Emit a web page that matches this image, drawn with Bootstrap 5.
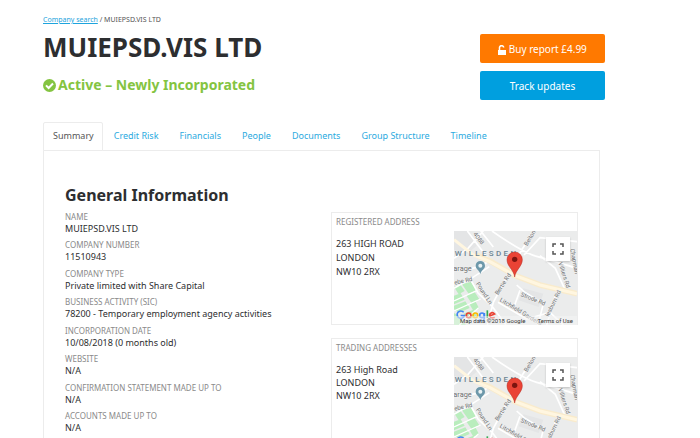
<!DOCTYPE html>
<html lang="en">
<head>
<meta charset="utf-8">
<meta name="viewport" content="width=device-width, initial-scale=1">
<title>MUIEPSD.VIS LTD</title>
<link href="https://cdn.jsdelivr.net/npm/bootstrap@5.3.0/dist/css/bootstrap.min.css" rel="stylesheet">
<style>
body{font-family:"Noto Sans","Open Sans",sans-serif;color:#2d2e30;font-size:10px;line-height:12px;background:#fff}
.page{padding:14px 95px 0 43px}
.crumbs{font-size:7px;line-height:11px;color:#555}
.crumbs a{color:#1ea4dd}
h1{font-size:26px;line-height:38px;font-weight:700;margin:3px 0 0}
.status{font-size:14px;line-height:20px;font-weight:700;color:#84c441;margin:9px 0 0;gap:2px}
.actions{width:125px;gap:8px;padding-top:20px}
.actions .btn{font-size:10px;line-height:16px;padding:5px 4px;border-radius:2px;color:#fff;height:29px}
.buy{background:#ff7900}.track{background:#009fdf}
.report{margin:22px 5px 0 0}
.nav-tabs{--bs-nav-tabs-border-color:#ececec;--bs-nav-tabs-border-radius:2px;--bs-nav-tabs-link-active-border-color:#ececec;--bs-nav-tabs-link-active-color:#555;--bs-nav-link-color:#2baae0}
.nav-tabs .nav-link{font-size:9px;line-height:12px;padding:7px 9px 8px 10px}
.nav-tabs .nav-link.active{padding-left:9px;padding-right:8px}
.panel{border:1px solid #ececec;border-top:0;padding:32px 21px 40px 21px}
h2{font-size:16px;line-height:24px;font-weight:700;margin:0 0 4px}
.facts dt,.box-title{font-size:8px;line-height:12px;font-weight:400;color:#8a8a8a;text-transform:uppercase;margin:0}
.facts dd{margin:0 0 5px;line-height:11px;font-size:9px}
.facts>div:nth-child(even) dd{margin-bottom:6px}
.boxes{width:247px;gap:13px;padding-top:29px}
.address{border:1px solid #ececec}
.box-title{padding:3px 4px}
.address address{font-size:9px;line-height:14px;margin:0;padding:6px 4px}
.address address.tight{line-height:13px}
.map{width:123px;height:94px;margin:0 0 -1px}
.map svg{display:block}
.expand{right:7px;top:6px;width:24px;height:24px;background:#fff;border:0;box-shadow:0 1px 2px #0003}
.credit{left:0;right:0;bottom:0;padding:0 4px 0 6px;font:6px/9px Roboto,sans-serif;color:#333;background:#f5f5f580}
.credit a{color:#333}
</style>
<script src="https://cdn.jsdelivr.net/npm/bootstrap@5.3.0/dist/js/bootstrap.bundle.min.js"></script>
</head>
<body>
<svg width="0" height="0" class="position-absolute" aria-hidden="true">
<symbol id="map" viewBox="12 18 369 282">
<path fill="#ebecec" d="M12 18h369v282H12z"/>
<path fill="#e4e5e6" d="M12 18h42l26 44-28 24-40-12zM220 190l60 16-14 40-60-20z"/>
<path fill="#b9edbd" d="M12 186l18-8 14 20-18 10zM36 178l26-8 18 26-24 10zM12 212l20-7 12 19-32 14zM48 210l26-9 14 22-24 10zM12 242l34-13 13 20-32 14-15-10zM58 236l18-7 12 22-18 6zM12 264l12 7 24 29H12zM40 266l30-12 10 18-24 12z"/>
<g fill="none" stroke="#fff" stroke-width="5">
<path d="M12 100L54 70 100 18M52 18L112 98 168 140M92 18L130 66M126 18Q220 84 260 94T381 130M250 18L206 90 130 232 112 300M12 132Q80 140 120 105M12 190L64 160 118 125M60 160L84 204 128 246 168 300M200 180L222 200 280 236 264 300M210 196L192 246M222 90L270 38 381 50M270 92L316 130 350 205M316 212L290 300M144 232L230 282 300 262 340 300"/>
<path stroke-width="4" d="M12 228L82 196M12 258L92 222M28 300L86 248"/>
</g>
<path fill="none" stroke="#f9ebcc" stroke-width="17" d="M80 90L120 108 196 152 270 180 381 206"/>
<path fill="none" stroke="#fff6e0" stroke-width="9" d="M12 44L70 90L120 110 196 152 270 180 381 206"/>
<g font-family="Roboto, sans-serif" font-size="18" fill="#6e7072" stroke="#f1f1f1" stroke-width="3" paint-order="stroke">
<text transform="translate(69 28) rotate(52)">4088</text>
<text transform="translate(232 64) rotate(-60)">Belton</text>
<text transform="translate(14 179) rotate(-12)">ebe Rd</text>
<text transform="translate(77 176) rotate(57)">Pound Ln</text>
<text transform="translate(144 211) rotate(-57)">Bertie Rd</text>
<text transform="translate(211 213) rotate(22)">Strode Rd</text>
<text transform="translate(148 228) rotate(31)">Litchfield Gardens</text>
<text transform="translate(296 276) rotate(-64)">lesburn Rd</text>
<text transform="translate(325 114) rotate(72)">Villiers Rd</text>
<text transform="translate(361 72) rotate(80)">Chapman</text>
<text x="10" y="139" font-size="22">arage</text>
</g>
<text x="14" y="93" font-family="Roboto, sans-serif" font-size="24" font-weight="500" letter-spacing="7" fill="#6c8593">WILLESDEN</text>
<path fill="#6d98aa" d="M91 147c-3-12-14-15-14-25a14 14 0 0 1 28 0c0 10-11 13-14 25z"/><circle cx="91" cy="122" r="6" fill="#e9f2f4"/>
<path fill="#ea4335" stroke="#b52b21" stroke-width="1.500" d="M194 156c-3-22-23-32-23-52a23 23 0 0 1 46 0c0 20-20 30-23 52z"/><circle cx="194" cy="103" r="8" fill="#7c140f"/>
<g fill="none" stroke-width="5">
<path stroke="#4285f4" d="M41 262a11 11 0 1 0 2 10H32"/>
<circle cx="56" cy="271" r="7" stroke="#ea4335"/><circle cx="76" cy="271" r="7" stroke="#fbbc05"/>
<path stroke="#4285f4" d="M103 264v15q-1 9-8 9-6 0-8-5"/><circle cx="96" cy="271" r="7" stroke="#4285f4"/>
<path stroke="#34a853" d="M112 256v23"/><path stroke="#ea4335" d="M119 273l15-6q-4-5-9-4-8 3-6 11 5 8 15 3"/>
</g>
</symbol>
<symbol id="corners" viewBox="0 0 12 12"><path fill="none" stroke="#555" stroke-width="1.500" d="M1 4V1h3M8 1h3v3M11 8v3H8M4 11H1V8"/></symbol>
</svg>
<main class="page">
<header class="d-flex justify-content-between align-items-start">
<div>
<nav class="crumbs" aria-label="Breadcrumb"><a href="#">Company search</a> / MUIEPSD.VIS LTD</nav>
<h1>MUIEPSD.VIS LTD</h1>
<p class="status d-flex align-items-center"><svg width="13" height="13" viewBox="0 0 13 13" aria-hidden="true"><circle cx="6.500" cy="6.500" r="6.500" fill="#84c441"/><path d="M3 6.400l2.600 2.600L10 4.500" fill="none" stroke="#fff" stroke-width="2"/></svg>Active – Newly Incorporated</p>
</div>
<div class="actions d-flex flex-column flex-shrink-0">
<button type="button" class="btn border-0 buy"><svg width="8" height="10" viewBox="0 0 8 10" aria-hidden="true"><path fill="#fff" d="M0 5h8v5H0z"/><path d="M1.500 5V3a2 2 0 0 1 4.200-.5" fill="none" stroke="#fff" stroke-width="1.500"/></svg> Buy report £4.99</button>
<button type="button" class="btn border-0 track">Track updates</button>
</div>
</header>
<section class="report">
<ul class="nav nav-tabs flex-nowrap text-nowrap">
<li class="nav-item"><a class="nav-link active" aria-current="page" href="#">Summary</a></li>
<li class="nav-item"><a class="nav-link" href="#">Credit Risk</a></li>
<li class="nav-item"><a class="nav-link" href="#">Financials</a></li>
<li class="nav-item"><a class="nav-link" href="#">People</a></li>
<li class="nav-item"><a class="nav-link" href="#">Documents</a></li>
<li class="nav-item"><a class="nav-link" href="#">Group Structure</a></li>
<li class="nav-item"><a class="nav-link" href="#">Timeline</a></li>
</ul>
<div class="panel d-flex justify-content-between align-items-start">
<div>
<h2>General Information</h2>
<dl class="facts mb-0">
<div><dt>Name</dt><dd>MUIEPSD.VIS LTD</dd></div>
<div><dt>Company number</dt><dd>11510943</dd></div>
<div><dt>Company type</dt><dd>Private limited with Share Capital</dd></div>
<div><dt>Business activity (SIC)</dt><dd>78200 - Temporary employment agency activities</dd></div>
<div><dt>Incorporation date</dt><dd>10/08/2018 (0 months old)</dd></div>
<div><dt>Website</dt><dd>N/A</dd></div>
<div><dt>Confirmation statement made up to</dt><dd>N/A</dd></div>
<div><dt>Accounts made up to</dt><dd>N/A</dd></div>
</dl>
</div>
<div class="boxes d-flex flex-column flex-shrink-0">
<section class="address">
<h3 class="box-title">Registered address</h3>
<div class="d-flex justify-content-between">
<address>263 HIGH ROAD<br>LONDON<br>NW10 2RX</address>
<div class="map position-relative"><svg width="123" height="94" role="img" aria-label="Map of Willesden"><use href="#map"/></svg>
<button type="button" class="expand position-absolute d-flex align-items-center justify-content-center p-0" aria-label="Full screen"><svg width="12" height="12"><use href="#corners"/></svg></button>
<div class="credit position-absolute d-flex justify-content-between"><span>Map data ©2018 Google</span><a class="text-decoration-none" href="#">Terms of Use</a></div></div>
</div>
</section>
<section class="address">
<h3 class="box-title">Trading addresses</h3>
<div class="d-flex justify-content-between">
<address class="tight">263 High Road<br>LONDON<br>NW10 2RX</address>
<div class="map position-relative"><svg width="123" height="94" role="img" aria-label="Map of Willesden"><use href="#map"/></svg>
<button type="button" class="expand position-absolute d-flex align-items-center justify-content-center p-0" aria-label="Full screen"><svg width="12" height="12"><use href="#corners"/></svg></button>
<div class="credit position-absolute d-flex justify-content-between"><span>Map data ©2018 Google</span><a class="text-decoration-none" href="#">Terms of Use</a></div></div>
</div>
</section>
</div>
</div>
</section>
</main>
</body>
</html>
